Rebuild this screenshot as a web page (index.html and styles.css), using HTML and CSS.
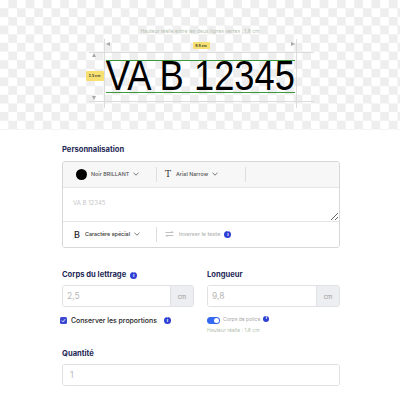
FILE: index.html
```html
<!DOCTYPE html>
<html lang="fr">

<head>
    <meta charset="UTF-8">
    <meta name="viewport" content="width=device-width, initial-scale=1.0">
    <title>Lettrage adhésif</title>
    <link rel="stylesheet" href="styles.css">
</head>

<body>
    <div class="stage">
        <p class="stage-note">Hauteur réelle entre les deux lignes vertes : 1.6 cm</p>
        <div class="plate">
            <span class="rule rule-top"></span>
            <span class="rule rule-bottom"></span>
            <span class="arrow arrow-left"></span>
            <span class="arrow arrow-right"></span>
            <span class="arrow arrow-up"></span>
            <span class="arrow arrow-down"></span>
            <span class="badge badge-width">9.8 cm</span>
            <span class="badge badge-height">2.5 cm</span>
            <div class="plate-text"><span>VA B 12345</span></div>
        </div>
    </div>

    <div class="panel">
        <h3 class="label">Personnalisation</h3>
        <div class="editor">
            <div class="toolbar">
                <div class="tool tool-color">
                    <span class="swatch"></span>
                    <span>Noir BRILLANT</span>
                    <svg class="chevron" width="6" height="4" viewBox="0 0 6 4"><polyline points="0.5,0.8 3,3.2 5.5,0.8" /></svg>
                </div>
                <div class="tool tool-font">
                    <span class="glyph-t">T</span>
                    <span>Arial Narrow</span>
                    <svg class="chevron" width="6" height="4" viewBox="0 0 6 4"><polyline points="0.5,0.8 3,3.2 5.5,0.8" /></svg>
                </div>
            </div>
            <textarea class="editor-text" placeholder="VA B 12345"></textarea>
            <div class="toolbar toolbar-bottom">
                <div class="tool tool-special">
                    <span class="glyph-b">B</span>
                    <span>Caractère spécial</span>
                    <svg class="chevron" width="6" height="4" viewBox="0 0 6 4"><polyline points="0.5,0.8 3,3.2 5.5,0.8" /></svg>
                </div>
                <div class="tool tool-reverse">
                    <svg class="swap" width="9" height="8" viewBox="0 0 9 8">
                        <path d="M0.5 2.5h7.5M6.5 1l1.5 1.5M8.5 5.5H1M2.5 7L1 5.5" />
                    </svg>
                    <span>Inverser le texte</span>
                    <span class="info">i</span>
                </div>
            </div>
        </div>

        <div class="size-grid">
            <div class="size-col">
                <h3 class="label">Corps du lettrage <span class="info">i</span></h3>
                <div class="field">
                    <input type="text" value="2,5">
                    <span class="unit">cm</span>
                </div>
                <label class="check-row">
                    <span class="checkbox">
                        <svg width="5" height="5" viewBox="0 0 5 5"><polyline points="0.8,2.6 2,3.8 4.2,1.2" /></svg>
                    </span>
                    Conserver les proportions <span class="info">i</span>
                </label>
            </div>
            <div class="size-col">
                <h3 class="label">Longueur</h3>
                <div class="field">
                    <input type="text" value="9,8">
                    <span class="unit">cm</span>
                </div>
                <div class="toggle-row">
                    <span class="toggle"></span>
                    <span>Corps de police</span>
                    <span class="info info-small">i</span>
                </div>
                <p class="real-height">Hauteur réelle : 1.6 cm</p>
            </div>
        </div>

        <h3 class="label label-qty">Quantité</h3>
        <div class="field field-qty">
            <input type="text" value="1">
        </div>
    </div>
</body>

</html>
```

FILE: styles.css
```css
body {
    margin: 0;
    font-family: Inter, "Noto Sans", sans-serif;
    background: white;
    color: #1e2856;
}

.stage {
    height: 130px;
    padding-top: 28px;
    box-sizing: border-box;
    background-color: white;
    background-image:
        linear-gradient(45deg, #eeeeee 25%, transparent 25%, transparent 75%, #eeeeee 75%),
        linear-gradient(45deg, #eeeeee 25%, transparent 25%, transparent 75%, #eeeeee 75%);
    background-size: 17.3px 17.3px;
    background-position: 8.3px 8.3px, 17px 17px;
}

.stage-note {
    margin: 0;
    text-align: center;
    font-size: 5px;
    line-height: 6px;
    color: #b3bfae;
}

.plate {
    position: relative;
    width: 193px;
    height: 69px;
    margin: 5px auto 0;
    padding-top: 21px;
    box-sizing: border-box;
    border-left: 1px solid #dcdcdc;
    border-right: 1px solid #dcdcdc;
}

.rule {
    position: absolute;
    left: -16px;
    width: 225px;
    height: 1px;
    background: #dcdcdc;
}

.rule-top {
    top: 13px;
}

.rule-bottom {
    top: 62px;
}

.arrow {
    position: absolute;
    width: 0;
    height: 0;
    border: 2.5px solid transparent;
}

.arrow-left {
    left: 1px;
    top: 3px;
    border-left: 0;
    border-right: 4px solid #a8a8a8;
}

.arrow-right {
    right: 1px;
    top: 3px;
    border-right: 0;
    border-left: 4px solid #a8a8a8;
}

.arrow-up {
    left: -13px;
    top: 14px;
    border-top: 0;
    border-bottom: 4px solid #a8a8a8;
}

.arrow-down {
    left: -13px;
    top: 57px;
    border-bottom: 0;
    border-top: 4px solid #a8a8a8;
}

.badge {
    position: absolute;
    background: #f8e070;
    border-radius: 1px;
    font-size: 3.5px;
    font-weight: 700;
    color: #4a4a3a;
    display: flex;
    align-items: center;
    justify-content: center;
}

.badge-width {
    left: 88px;
    top: 3px;
    width: 17px;
    height: 7px;
}

.badge-height {
    left: -19px;
    top: 32px;
    width: 18px;
    height: 10px;
}

.plate-text {
    margin: 0 1px;
    height: 33px;
    box-sizing: border-box;
    border-top: 1.5px solid #3c9a3c;
    border-bottom: 1.5px solid #3c9a3c;
    font-family: "Liberation Sans", Arial, sans-serif;
    font-size: 42px;
    line-height: 30.5px;
    color: black;
    text-align: center;
    white-space: nowrap;
}

/* no narrow face installed: squeeze the regular one */
.plate-text span {
    display: inline-block;
    transform: scaleX(0.865);
    transform-origin: center;
    margin: 0 -20px;
}

.panel {
    padding: 14px 60px 0 62px;
}

.label {
    margin: 0 0 4.5px;
    font-size: 7.6px;
    line-height: 12px;
    font-weight: 700;
    color: #1e2856;
    display: flex;
    align-items: center;
    gap: 4px;
}

.editor {
    border: 1px solid #d6d7db;
    border-radius: 3px;
    overflow: hidden;
}

.toolbar {
    display: flex;
    height: 26px;
    background: #f7f7f7;
    border-bottom: 1px solid #e6e6e6;
    box-sizing: border-box;
}

.toolbar-bottom {
    background: white;
    border-bottom: 0;
    border-top: 1px solid #e6e6e6;
    height: 26px;
}

.tool {
    display: flex;
    align-items: center;
    gap: 4px;
    font-size: 5.4px;
    font-weight: 500;
    color: #555;
    box-sizing: border-box;
    border-right: 1px solid #dedede;
    margin: 5px 0;
}

.tool-color {
    width: 94px;
    padding-left: 13px;
}

.tool-font {
    width: 89px;
    padding-left: 8px;
}

.tool-special {
    width: 94px;
    padding-left: 11px;
    color: #333;
}

.tool-reverse {
    border-right: 0;
    padding-left: 8px;
    color: #b0b0b0;
}

.swatch {
    width: 11px;
    height: 11px;
    border-radius: 50%;
    background: black;
}

.chevron {
    fill: none;
    stroke: #555;
    stroke-width: 0.8;
}

.glyph-t {
    font-family: "DejaVu Serif", serif;
    font-size: 9px;
    color: #333;
    margin-right: 1px;
}

.glyph-b {
    font-size: 9px;
    font-weight: 500;
    color: #222;
    margin-right: 1px;
}

.swap {
    fill: none;
    stroke: #b0b0b0;
    stroke-width: 0.8;
    margin-right: 1px;
}

.editor-text {
    display: block;
    width: 100%;
    height: 33px;
    box-sizing: border-box;
    border: 0;
    padding: 11px 10px;
    font-family: Inter, sans-serif;
    font-size: 6px;
    resize: vertical;
    outline: none;
}

.editor-text::placeholder {
    color: #c8c8c8;
}

.info {
    display: inline-flex;
    align-items: center;
    justify-content: center;
    width: 7px;
    height: 7px;
    border-radius: 50%;
    background: #2f3fd4;
    color: white;
    font-size: 5px;
    font-weight: 700;
    line-height: 1;
}

.info-small {
    width: 6px;
    height: 6px;
    font-size: 4.5px;
    margin-top: -3px;
}

.size-grid {
    display: grid;
    grid-template-columns: 132px 133px;
    column-gap: 13px;
    margin-top: 21.5px;
}

.size-col .label {
    margin-bottom: 4px;
}

.field {
    display: flex;
    height: 22px;
    border: 1px solid #dfe1e5;
    border-radius: 3px;
    box-sizing: border-box;
    overflow: hidden;
}

.field input {
    flex: 1;
    min-width: 0;
    border: 0;
    padding: 0 4px;
    font-family: Inter, sans-serif;
    font-size: 8.5px;
    color: #b8b8b8;
    outline: none;
}

.unit {
    width: 22px;
    background: #eceef1;
    border-left: 1px solid #dfe1e5;
    font-size: 6px;
    color: #9a9a9a;
    display: flex;
    align-items: center;
    justify-content: center;
}

.check-row {
    display: flex;
    align-items: center;
    gap: 4px;
    margin: 8.5px 0 0 -2px;
    height: 9px;
    font-size: 6.9px;
    font-weight: 500;
    color: #222;
}

.check-row .info {
    margin-left: 3px;
}

.checkbox {
    width: 7px;
    height: 7px;
    border-radius: 1.5px;
    background: #3a48d0;
    display: flex;
    align-items: center;
    justify-content: center;
}

.checkbox svg {
    fill: none;
    stroke: white;
    stroke-width: 0.9;
}

.toggle-row {
    display: flex;
    align-items: center;
    gap: 3px;
    margin-top: 8.5px;
    height: 9px;
    font-size: 5px;
    color: #a8a8a8;
}

.toggle-row span:nth-child(2) {
    margin-top: -2px;
}

.toggle {
    position: relative;
    width: 13px;
    height: 7px;
    border-radius: 4px;
    background: #3568f0;
}

.toggle::after {
    content: "";
    position: absolute;
    right: 1px;
    top: 1px;
    width: 5px;
    height: 5px;
    border-radius: 50%;
    background: white;
}

.real-height {
    margin: 2.5px 0 0;
    font-size: 5px;
    line-height: 6px;
    color: #b3bfae;
}

.label-qty {
    margin-top: 15px;
    margin-bottom: 4px;
}

.field-qty input {
    padding-left: 7px;
}
```
